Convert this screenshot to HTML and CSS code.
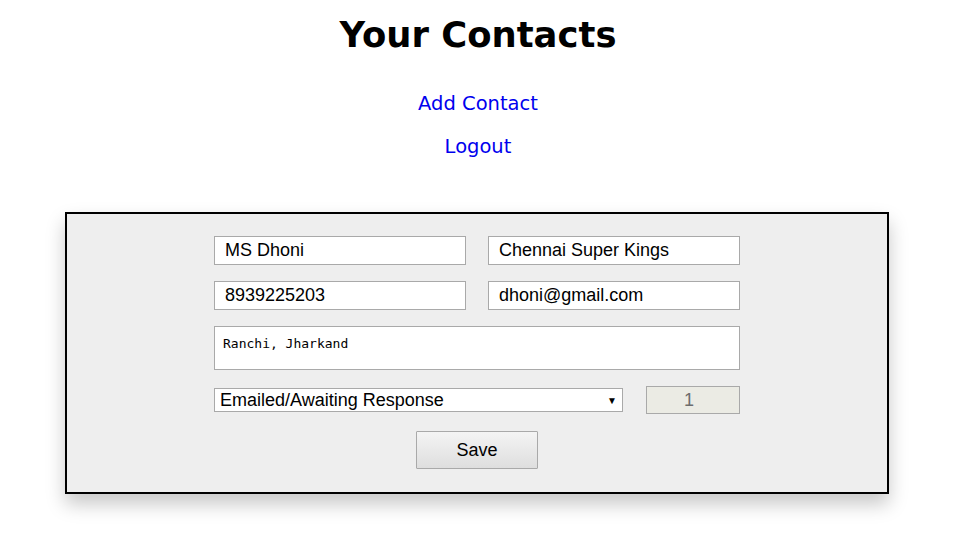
FILE: index.html
```html
<!DOCTYPE html>
<html lang="en">
<head>
<meta charset="utf-8">
<title>Your Contacts</title>
<link rel="stylesheet" href="styles.css">
</head>
<body>
<header class="page-header">
  <h1 class="title">Your Contacts</h1>
  <nav class="links">
    <a class="link" href="#">Add Contact</a>
    <a class="link" href="#">Logout</a>
  </nav>
</header>
<main class="card">
  <form class="contact-form">
    <div class="row two">
      <input class="field" type="text" value="MS Dhoni">
      <input class="field" type="text" value="Chennai Super Kings">
    </div>
    <div class="row two">
      <input class="field" type="text" value="8939225203">
      <input class="field" type="text" value="dhoni@gmail.com">
    </div>
    <div class="row">
      <textarea class="address" spellcheck="false">Ranchi, Jharkand</textarea>
    </div>
    <div class="row status-row">
      <div class="select">
        <span class="select-text">Emailed/Awaiting Response</span>
        <span class="select-arrow">&#9660;</span>
      </div>
      <input class="count" type="text" value="1" disabled>
    </div>
    <div class="row actions">
      <button class="save" type="button">Save</button>
    </div>
  </form>
</main>
</body>
</html>
```
FILE: styles.css
```css
html, body {
  margin: 0;
  padding: 0;
  background: #ffffff;
}
body {
  font-family: "DejaVu Sans", Verdana, sans-serif;
  color: #000;
  min-height: 537px;
}
.page-header {
  display: flex;
  flex-direction: column;
  align-items: center;
  padding-top: 15px;
}
.title {
  margin: 0;
  font-size: 35.4px;
  font-weight: bold;
  line-height: 40px;
}
.links {
  display: flex;
  flex-direction: column;
  align-items: center;
  gap: 21px;
  margin-top: 38px;
}
.link {
  color: #0000ee;
  text-decoration: none;
  font-size: 19.5px;
  line-height: 22px;
}
.card {
  box-sizing: border-box;
  width: 824px;
  margin: 54px 0 0 65px;
  border: 2px solid #000;
  background: #eeeeee;
  padding: 22px 0 23px;
  box-shadow: 0 10px 18px rgba(0, 0, 0, 0.22);
}
.contact-form {
  width: 526px;
  margin: 0 auto;
  display: flex;
  flex-direction: column;
}
.row {
  display: flex;
}
.row.two {
  gap: 22px;
  margin-bottom: 16px;
}
.field {
  box-sizing: border-box;
  width: 252px;
  height: 29px;
  margin: 0;
  border: 1px solid #a9a9a9;
  background: #fff;
  padding: 0 10px;
  font-family: "Liberation Sans", Arial, sans-serif;
  font-size: 18px;
  color: #000;
  outline: none;
}
.address {
  box-sizing: border-box;
  width: 526px;
  height: 44px;
  margin: 0 0 16px;
  border: 1px solid #a9a9a9;
  background: #fff;
  padding: 9px 8px;
  font-family: "DejaVu Sans Mono", "Liberation Mono", monospace;
  font-size: 13px;
  line-height: 16px;
  resize: none;
  color: #000;
  outline: none;
}
.status-row {
  align-items: center;
  justify-content: space-between;
  margin-bottom: 17px;
}
.select {
  box-sizing: border-box;
  width: 409px;
  height: 24px;
  border: 1px solid #a9a9a9;
  background: #fff;
  display: flex;
  align-items: center;
  justify-content: space-between;
  padding: 0 5px;
  font-family: "Liberation Sans", Arial, sans-serif;
  font-size: 18px;
}
.select-arrow {
  font-size: 10px;
  margin-right: 0;
}
.count {
  box-sizing: border-box;
  width: 94px;
  height: 28px;
  margin: 0;
  border: 1px solid #a9a9a9;
  background: #ebebe4;
  text-align: center;
  font-family: "Liberation Sans", Arial, sans-serif;
  font-size: 18px;
  color: #6d6d6d;
  padding: 0 8px 0 0;
}
.actions {
  justify-content: center;
}
.save {
  box-sizing: border-box;
  width: 122px;
  height: 38px;
  border: 1px solid #a9a9a9;
  border-radius: 1px;
  background: linear-gradient(#f4f4f4, #dedede);
  font-family: "Liberation Sans", Arial, sans-serif;
  font-size: 18px;
  color: #000;
  padding: 0;
}
```
